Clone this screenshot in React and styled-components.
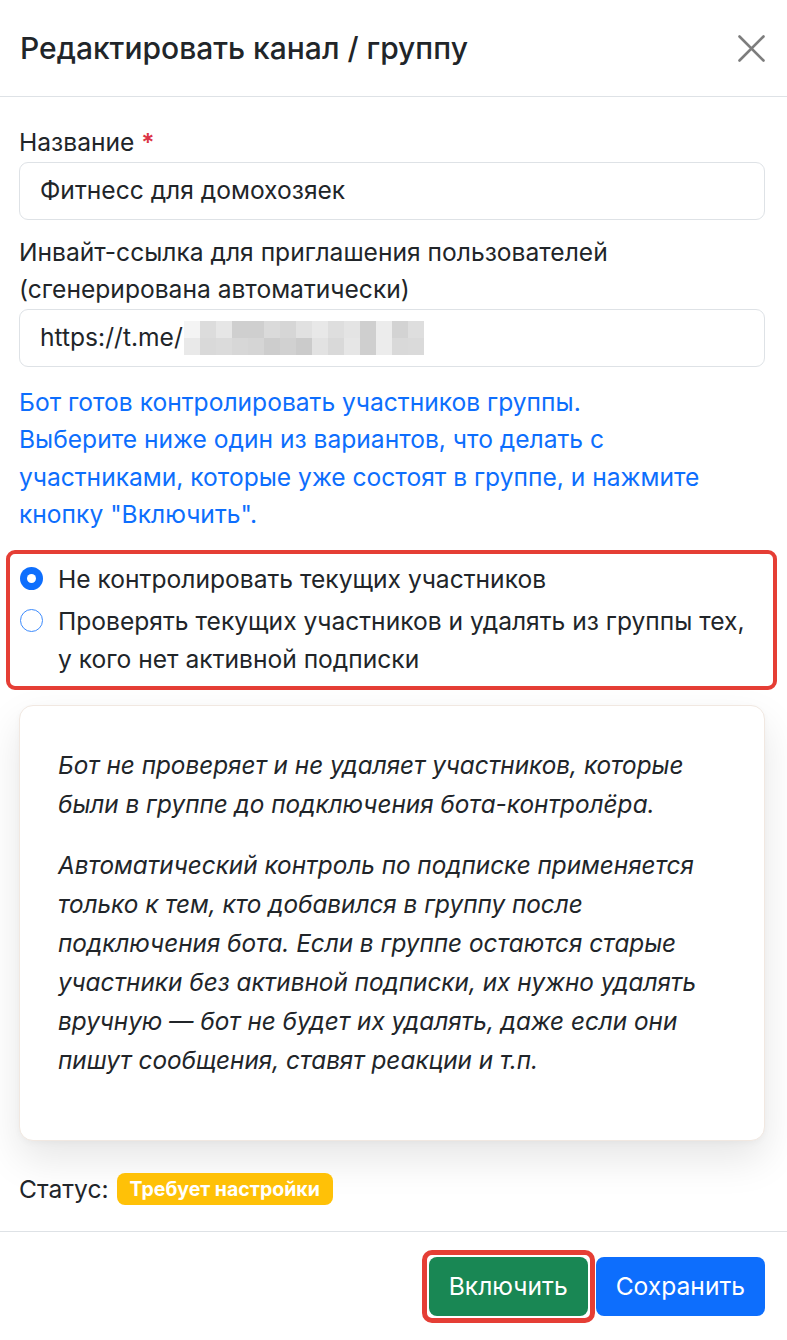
import React from "react";
import styled, { createGlobalStyle } from "styled-components";

const GlobalStyle = createGlobalStyle`
  html, body { margin: 0; padding: 0; background: #ffffff; }
  body {
    font-family: Inter, "Noto Sans", "DejaVu Sans", sans-serif;
    color: #212529;
    font-size: 24.6px;
    line-height: 37.5px;
    -webkit-font-smoothing: antialiased;
  }
  * { box-sizing: border-box; }
`;

const Modal = styled.div`
  width: 787px;
  background: #fff;
`;

const Header = styled.div`
  height: 97px;
  display: flex;
  align-items: center;
  justify-content: space-between;
  padding: 0 21px 0 20px;
  border-bottom: 1px solid #dee2e6;
`;

const Title = styled.h5`
  margin: 0;
  font-size: 30px;
  font-weight: 500;
  line-height: 1.2;
  color: #212529;
`;

const CloseButton = styled.button`
  width: 30px;
  height: 30px;
  padding: 0;
  border: 0;
  background: transparent;
  display: flex;
  align-items: center;
  justify-content: center;
  cursor: pointer;
`;

const Body = styled.div`
  padding: 27px 22px 23px 19px;
  display: flex;
  flex-direction: column;
`;

const Field = styled.div`
  display: flex;
  flex-direction: column;
  margin-top: ${(p) => p.$mt || 0}px;
`;

const Label = styled.label`
  display: block;
  line-height: 37.5px;
`;

const Required = styled.span`
  color: #dc3545;
  font-weight: 600;
`;

const InputBox = styled.div`
  height: 58px;
  border: 1px solid #dee2e6;
  border-radius: 9px;
  padding: 0 20px;
  display: flex;
  align-items: center;
  color: #212529;
  background: #fff;
  white-space: nowrap;
`;

const Mosaic = styled.span`
  display: inline-grid;
  grid-template-columns: repeat(15, 16px);
  grid-template-rows: repeat(2, 17px);
  margin-left: 1px;
`;

const Pixel = styled.span`
  background: ${(p) => p.$shade};
`;

const Info = styled.p`
  margin: 17px 0 0;
  color: #0d6efd;
  line-height: 37.5px;
`;

const Highlight = styled.div`
  margin: 16px -12px 0 -13px;
  border: 4px solid #e53e35;
  border-radius: 9px;
  padding: 6px 10px 8px 10px;
  display: flex;
  flex-direction: column;
  gap: 4px;
`;

const Option = styled.label`
  display: flex;
  align-items: flex-start;
  gap: 15px;
  line-height: 38px;
  cursor: pointer;
`;

const Radio = styled.span`
  flex: none;
  width: 23px;
  height: 23px;
  margin-top: 7.5px;
  border-radius: 50%;
  border: ${(p) => (p.$checked ? "none" : "1.5px solid #3d8bfd")};
  background: ${(p) => (p.$checked ? "#0d6efd" : "#fff")};
  display: flex;
  align-items: center;
  justify-content: center;
  &::after {
    content: "";
    display: ${(p) => (p.$checked ? "block" : "none")};
    width: 9px;
    height: 9px;
    border-radius: 50%;
    background: #fff;
  }
`;

const Card = styled.div`
  margin-top: 15px;
  border: 1px solid #f1e8e1;
  border-radius: 14px;
  padding: 40px 38px 38px;
  background: #fff;
  box-shadow: 0 18px 40px rgba(0, 0, 0, 0.1), 0 2px 6px rgba(0, 0, 0, 0.03);
`;

const CardText = styled.p`
  margin: 0 0 22px;
  font-style: italic;
  font-size: 24.3px;
  line-height: 39px;
  color: #212529;
`;

const StatusRow = styled.div`
  margin-top: 29px;
  display: flex;
  align-items: center;
  gap: 8px;
  line-height: 38px;
`;

const Badge = styled.span`
  display: inline-flex;
  align-items: center;
  height: 32px;
  padding: 0 13px;
  border-radius: 8px;
  background: #ffc107;
  color: #fff;
  font-size: 19.5px;
  font-weight: 700;
`;

const Footer = styled.div`
  border-top: 1px solid #dee2e6;
  padding: 18px 22px 16px;
  display: flex;
  justify-content: flex-end;
  align-items: center;
  gap: 1px;
`;

const HighlightButton = styled.div`
  border: 5px solid #e53e35;
  border-radius: 10px;
  padding: 2px;
  display: flex;
`;

const Button = styled.button`
  height: 59px;
  padding: 0 ${(p) => p.$px || 20}px;
  border: 0;
  border-radius: 8px;
  background: ${(p) => (p.$variant === "success" ? "#198754" : "#0d6efd")};
  color: #fff;
  font-family: inherit;
  font-size: 24.6px;
  cursor: pointer;
`;

const shades = [
  "#f4f4f4", "#dcdcdc", "#e6e6e6", "#cfcfcf", "#cfcfcf", "#dadada", "#d6d6d6", "#e1e1e1", "#e8e8e8", "#dedede", "#e4e4e4", "#cfcfcf", "#ececec", "#d3d3d3", "#dedede",
  "#e9e9e9", "#d9d9d9", "#dbdbdb", "#d7d7d7", "#d5d5d5", "#cdcdcd", "#d1d1d1", "#cbcbcb", "#e2e2e2", "#d9d9d9", "#e6e6e6", "#cfcfcf", "#ececec", "#d9d9d9", "#dadada",
];

export default function App() {
  return (
    <>
      <GlobalStyle />
      <Modal>
        <Header>
          <Title>Редактировать канал / группу</Title>
          <CloseButton aria-label="Закрыть">
            <svg width="27" height="27" viewBox="0 0 27 27">
              <path d="M1.5 1.5 L25.5 25.5 M25.5 1.5 L1.5 25.5" stroke="#7d7d7d" strokeWidth="2.6" strokeLinecap="round" />
            </svg>
          </CloseButton>
        </Header>
        <Body>
          <Field>
            <Label>
              Название <Required>*</Required>
            </Label>
            <InputBox>Фитнесс для домохозяек</InputBox>
          </Field>
          <Field $mt={14}>
            <Label>
              Инвайт-ссылка для приглашения пользователей
              <br />
              (сгенерирована автоматически)
            </Label>
            <InputBox>
              https://t.me/
              <Mosaic>
                {shades.map((s, i) => (
                  <Pixel key={i} $shade={s} />
                ))}
              </Mosaic>
            </InputBox>
          </Field>
          <Info>
            Бот готов контролировать участников группы.
            <br />
            Выберите ниже один из вариантов, что делать с
            <br />
            участниками, которые уже состоят в группе, и нажмите
            <br />
            кнопку "Включить".
          </Info>
          <Highlight>
            <Option>
              <Radio $checked />
              <span>Не контролировать текущих участников</span>
            </Option>
            <Option>
              <Radio />
              <span>
                Проверять текущих участников и удалять из группы тех,
                <br />у кого нет активной подписки
              </span>
            </Option>
          </Highlight>
          <Card>
            <CardText>
              Бот не проверяет и не удаляет участников, которые
              <br />
              были в группе до подключения бота-контролёра.
            </CardText>
            <CardText>
              Автоматический контроль по подписке применяется
              <br />
              только к тем, кто добавился в группу после
              <br />
              подключения бота. Если в группе остаются старые
              <br />
              участники без активной подписки, их нужно удалять
              <br />
              вручную — бот не будет их удалять, даже если они
              <br />
              пишут сообщения, ставят реакции и т.п.
            </CardText>
          </Card>
          <StatusRow>
            Статус: <Badge>Требует настройки</Badge>
          </StatusRow>
        </Body>
        <Footer>
          <HighlightButton>
            <Button $variant="success">Включить</Button>
          </HighlightButton>
          <Button $variant="primary" $px={20}>
            Сохранить
          </Button>
        </Footer>
      </Modal>
    </>
  );
}
